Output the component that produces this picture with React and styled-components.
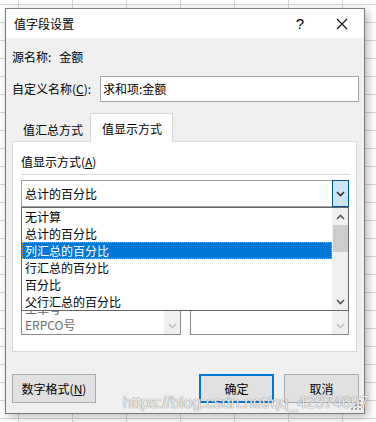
import React from 'react';
import styled, { createGlobalStyle } from 'styled-components';

const GlobalStyle = createGlobalStyle`
    html, body {
        margin: 0;
        padding: 0;
    }
    body {
        width: 376px;
        height: 422px;
        overflow: hidden;
        background-color: #fff;
        background-image:
            linear-gradient(to right, #d6d6d6 1px, transparent 1px),
            linear-gradient(to bottom, #d6d6d6 1px, transparent 1px);
        background-size: 54px 18px;
        background-position: 18px 4px;
        font-family: "Noto Sans CJK SC", "Liberation Sans", sans-serif;
        font-size: 12px;
        color: #000;
    }
`;

const Page = styled.div`
    position: relative;
    width: 376px;
    height: 422px;
    padding: 8px 0 0 5px;
    box-sizing: border-box;
`;

const Dialog = styled.div`
    position: relative;
    width: 360px;
    height: 406px;
    box-sizing: border-box;
    border: 1px solid #7a7a7a;
    background: #f0f0f0;
    box-shadow: 3px 3px 9px rgba(0, 0, 0, 0.28);
    display: flex;
    flex-direction: column;
`;

const TitleBar = styled.div`
    height: 29px;
    background: #fff;
    display: flex;
    align-items: center;
    padding-left: 8px;
    flex-shrink: 0;
`;

const Title = styled.div`
    flex: 1;
    line-height: 14px;
`;

const Help = styled.div`
    width: 20px;
    text-align: center;
    font-family: "Liberation Sans", sans-serif;
    font-size: 15px;
    margin-right: 26px;
`;

const Close = styled.div`
    width: 12px;
    display: flex;
    justify-content: center;
    margin-right: 16px;
`;

const Body = styled.div`
    flex: 1;
    padding: 0 5px 0 6px;
    display: flex;
    flex-direction: column;
`;

const Line = styled.div`
    display: flex;
    align-items: center;
    line-height: 14px;
    margin-top: ${({ top }) => top}px;
    gap: ${({ gap }) => gap || 0}px;
`;

const Label = styled.div`
    width: ${({ width }) => (width ? `${width}px` : 'auto')};
    flex-shrink: 0;
    line-height: 14px;
`;

const Key = styled.span`
    text-decoration: underline;
    text-underline-offset: 1px;
`;

const TextBox = styled.div`
    flex: 1;
    height: 26px;
    box-sizing: border-box;
    border: 1px solid #a5a5a5;
    background: #fff;
    padding-left: 2px;
    display: flex;
    align-items: center;
`;

const TabStrip = styled.div`
    display: flex;
    align-items: flex-end;
    margin-top: 11px;
    padding-left: 1px;
    height: 28px;
    position: relative;
    z-index: 1;
`;

const Tab = styled.div`
    box-sizing: border-box;
    height: ${({ active }) => (active ? 29 : 26)}px;
    padding: ${({ active }) => (active ? '0 10px 0 11px' : '0 6px 0 9px')};
    display: flex;
    align-items: center;
    background: ${({ active }) => (active ? '#fff' : '#f0f0f0')};
    border: 1px solid ${({ active }) => (active ? '#d9d9d9' : 'transparent')};
    border-bottom: none;
    margin-bottom: ${({ active }) => (active ? -1 : 0)}px;
    padding-top: ${({ active }) => (active ? 0 : 2)}px;
`;

const Panel = styled.div`
    width: 345px;
    height: 211px;
    box-sizing: border-box;
    border: 1px solid #d9d9d9;
    background: #fff;
    padding: 0 7px 0 8px;
    display: flex;
    flex-direction: column;
`;

const Separator = styled.div`
    height: 1px;
    background: #dadada;
    margin-top: 5px;
    width: 329px;
`;

const ComboWrap = styled.div`
    position: relative;
    margin-top: 5px;
    z-index: 2;
`;

const Combo = styled.div`
    height: 27px;
    box-sizing: border-box;
    border: 1px solid #a0a0a0;
    background: #fff;
    display: flex;
    align-items: stretch;
`;

const ComboText = styled.div`
    flex: 1;
    padding-left: 3px;
    display: flex;
    align-items: center;
`;

const ComboButton = styled.div`
    width: 17px;
    box-sizing: border-box;
    border: 1px solid #005499;
    background: #cce4f7;
    display: flex;
    align-items: center;
    justify-content: center;
    margin: -1px -1px -1px 0;
`;

const DropList = styled.div`
    position: absolute;
    left: 0;
    right: 0;
    top: 100%;
    height: 104px;
    box-sizing: border-box;
    border: 1px solid #646464;
    background: #fff;
    display: flex;
`;

const Items = styled.div`
    flex: 1;
`;

const Item = styled.div`
    height: 17px;
    box-sizing: border-box;
    line-height: 15px;
    padding-left: 2px;
    border: 1px dotted ${({ selected }) => (selected ? '#f59a23' : 'transparent')};
    background: ${({ selected }) => (selected ? '#0078d7' : 'transparent')};
    color: ${({ selected }) => (selected ? '#fff' : '#000')};
    white-space: nowrap;
`;

const ScrollBar = styled.div`
    width: 16px;
    background: #f0f0f0;
    display: flex;
    flex-direction: column;
    align-items: center;
`;

const ArrowCell = styled.div`
    height: 17px;
    width: 100%;
    display: flex;
    align-items: center;
    justify-content: center;
`;

const Thumb = styled.div`
    width: 15px;
    height: ${({ size }) => size}px;
    background: #cdcdcd;
`;

const Filler = styled.div`
    flex: 1;
`;

const FieldRow = styled.div`
    display: flex;
    gap: 9px;
    margin-top: 10px;
`;

const FieldCol = styled.div`
    width: ${({ width }) => width}px;
    display: flex;
    flex-direction: column;
    gap: 4px;
`;

const ListBox = styled.div`
    height: 100px;
    box-sizing: border-box;
    border: 1px solid #8b8b8b;
    background: #fff;
    display: flex;
    color: #6d6d6d;
    overflow: hidden;
`;

const ListItems = styled.div`
    flex: 1;
    display: flex;
    flex-direction: column;
    justify-content: flex-end;
    padding-bottom: 1px;
`;

const ListItem = styled.div`
    height: 16px;
    line-height: 16px;
    padding-left: 3px;
`;

const Footer = styled.div`
    display: flex;
    margin-top: 22px;
`;

const Button = styled.div`
    width: ${({ width }) => width}px;
    height: 29px;
    box-sizing: border-box;
    border: ${({ primary }) => (primary ? '2px solid #0078d7' : '1px solid #adadad')};
    background: #e1e1e1;
    display: flex;
    align-items: center;
    justify-content: center;
    margin-left: ${({ gap }) => gap || 0}px;
`;

const Watermark = styled.div`
    position: absolute;
    left: 123px;
    top: 394px;
    font-family: "Liberation Sans", sans-serif;
    font-size: 16px;
    color: rgba(255, 255, 255, 0.85);
    text-shadow:
        0 0 1px rgba(90, 90, 90, 0.6),
        0 0 1px rgba(90, 90, 90, 0.6);
    pointer-events: none;
    white-space: nowrap;
`;

const Grip = styled.svg`
    position: absolute;
    right: 2px;
    bottom: 2px;
`;

const Chevron = ({ dir = 'down', color = '#222' }) => (
    <svg width="9" height="6" viewBox="0 0 9 6">
        <path
            d={dir === 'down' ? 'M1 1 L4.5 4.5 L8 1' : 'M1 5 L4.5 1.5 L8 5'}
            fill="none"
            stroke={color}
            strokeWidth="1.6"
        />
    </svg>
);

const options = ['无计算', '总计的百分比', '列汇总的百分比', '行汇总的百分比', '百分比', '父行汇总的百分比'];
const fields = ['订单号', '日期', '物料号', '数量', '工单号', 'ERPCO号'];

const App = () => (
    <Page>
        <GlobalStyle />
        <Dialog>
            <TitleBar>
                <Title>值字段设置</Title>
                <Help>?</Help>
                <Close>
                    <svg width="12" height="12" viewBox="0 0 12 12">
                        <path d="M1 1 L11 11 M11 1 L1 11" stroke="#111" strokeWidth="1.1" />
                    </svg>
                </Close>
            </TitleBar>
            <Body>
                <Line top={12} gap={8}>
                    <Label>源名称:</Label>
                    <span>金额</span>
                </Line>
                <Line top={12}>
                    <Label width={88}>自定义名称(<Key>C</Key>):</Label>
                    <TextBox>求和项:金额</TextBox>
                </Line>
                <TabStrip>
                    <Tab>值汇总方式</Tab>
                    <Tab active>值显示方式</Tab>
                </TabStrip>
                <Panel>
                    <Line top={13}>
                        <Label>值显示方式(<Key>A</Key>)</Label>
                    </Line>
                    <Separator />
                    <ComboWrap>
                        <Combo>
                            <ComboText>总计的百分比</ComboText>
                            <ComboButton>
                                <Chevron color="#333" />
                            </ComboButton>
                        </Combo>
                        <DropList>
                            <Items>
                                {options.map((o, i) => (
                                    <Item key={o} selected={i === 2}>{o}</Item>
                                ))}
                            </Items>
                            <ScrollBar>
                                <ArrowCell><Chevron dir="up" color="#555" /></ArrowCell>
                                <Thumb size={27} />
                                <Filler />
                                <ArrowCell><Chevron color="#555" /></ArrowCell>
                            </ScrollBar>
                        </DropList>
                    </ComboWrap>
                    <FieldRow>
                        <FieldCol width={160}>
                            <Label>基本字段(<Key>F</Key>):</Label>
                            <ListBox>
                                <ListItems>
                                    {fields.map((f) => <ListItem key={f}>{f}</ListItem>)}
                                </ListItems>
                                <ScrollBar>
                                    <Filler />
                                    <ArrowCell><Chevron color="#c4c4c4" /></ArrowCell>
                                </ScrollBar>
                            </ListBox>
                        </FieldCol>
                        <FieldCol width={159}>
                            <Label>基本项(<Key>I</Key>):</Label>
                            <ListBox>
                                <ListItems />
                                <ScrollBar>
                                    <Filler />
                                    <ArrowCell><Chevron color="#c4c4c4" /></ArrowCell>
                                </ScrollBar>
                            </ListBox>
                        </FieldCol>
                    </FieldRow>
                </Panel>
                <Footer>
                    <Button width={84}>数字格式(<Key>N</Key>)</Button>
                    <Button width={75} primary gap={103}>确定</Button>
                    <Button width={75} gap={10}>取消</Button>
                </Footer>
            </Body>
            <Grip width="12" height="12" viewBox="0 0 12 12">
                {[[10, 2], [10, 6], [6, 6], [10, 10], [6, 10], [2, 10]].map(([x, y]) => (
                    <rect key={`${x}-${y}`} x={x - 1} y={y - 1} width="2" height="2" fill="#a0a0a0" />
                ))}
            </Grip>
        </Dialog>
        <Watermark>https://blog.csdn.net/qq_42374697</Watermark>
    </Page>
);

export default App;
